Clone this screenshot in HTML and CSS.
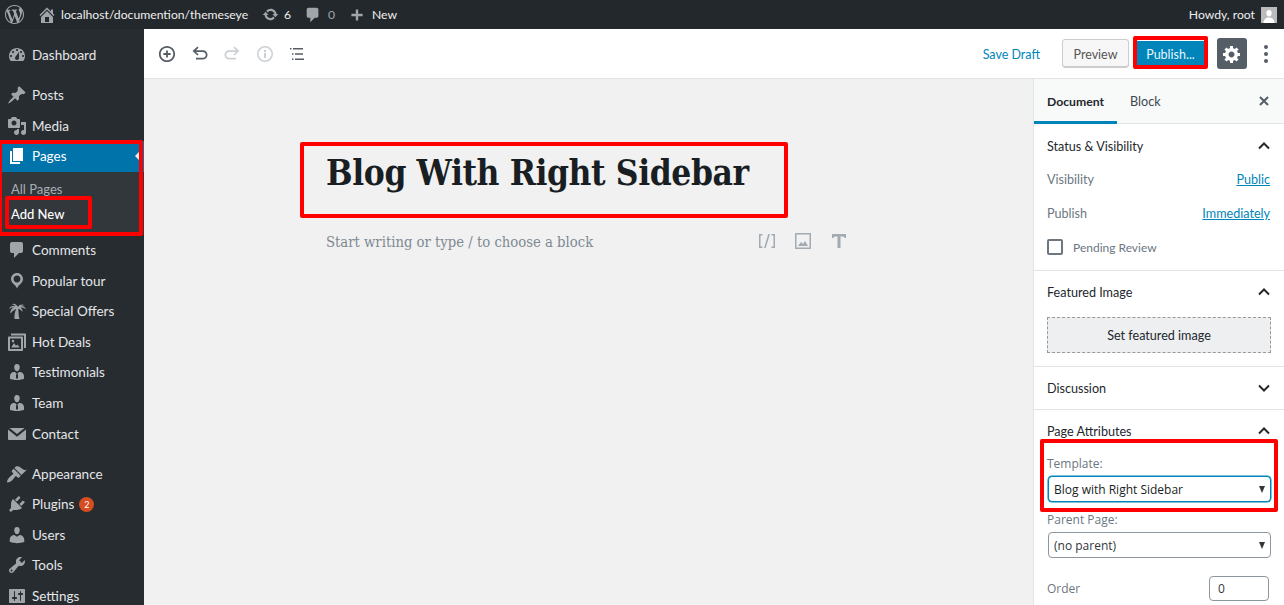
FILE: index.html
```html
<!DOCTYPE html>
<html lang="en">
<head>
<meta charset="utf-8">
<title>Edit Page</title>
<link rel="stylesheet" href="styles.css">
</head>
<body>
<header class="adminbar">
  <svg class="bar-wp" viewBox="0 0 20 20"><path d="M20 10c0-5.51-4.49-10-10-10C4.48 0 0 4.49 0 10c0 5.52 4.48 10 10 10 5.51 0 10-4.48 10-10zM7.78 15.37L4.37 6.22c.55-.02 1.17-.08 1.17-.08.5-.06.44-1.13-.06-1.11 0 0-1.45.11-2.37.11-.18 0-.37 0-.58-.01C4.12 2.69 6.87 1.11 10 1.11c2.33 0 4.45.87 6.05 2.34-.68-.11-1.65.39-1.65 1.58 0 .74.45 1.36.9 2.1.35.61.55 1.36.55 2.46 0 1.49-1.4 5-1.4 5l-3.03-8.37c.54-.02.82-.17.82-.17.5-.05.44-1.25-.06-1.22 0 0-1.44.12-2.38.12-.87 0-2.33-.12-2.33-.12-.5-.03-.56 1.2-.06 1.22l.92.08 1.26 3.41zM17.41 10c.24-.64.74-1.87.43-4.25.7 1.29 1.05 2.71 1.05 4.25 0 3.29-1.73 6.24-4.4 7.78.97-2.59 1.94-5.2 2.92-7.78zM6.1 18.09C3.12 16.65 1.11 13.53 1.11 10c0-1.3.23-2.48.72-3.59C3.25 10.3 4.67 14.2 6.1 18.09zm4.03-6.63l2.58 6.98c-.86.29-1.76.45-2.71.45-.79 0-1.57-.11-2.29-.33.81-2.38 1.62-4.74 2.42-7.1z"/></svg>
  <svg class="bar-icon home" viewBox="0 0 20 20"><path d="M16 8.5l1.53 1.53-1.06 1.06L10 4.62l-6.47 6.47-1.06-1.06L10 2.5l4 4v-2h2v4zm-6-2.46l6 5.99V18H4v-5.97zM12 17v-5H8v5h4z"/></svg>
  <span class="bar-site">localhost/documention/themeseye</span>
  <svg class="bar-icon update" viewBox="0 0 20 20"><path d="M10.2 3.28c3.53 0 6.43 2.61 6.92 6h2.08l-3.5 4-3.5-4h2.32c-.45-1.97-2.21-3.45-4.32-3.45-1.45 0-2.73.71-3.54 1.78L4.95 5.66C6.23 4.2 8.11 3.28 10.2 3.28zm-.4 13.44c-3.52 0-6.43-2.61-6.92-6H.8l3.5-4c1.17 1.33 2.33 2.67 3.5 4H5.48c.45 1.97 2.21 3.45 4.32 3.45 1.45 0 2.73-.71 3.54-1.78l1.71 1.95c-1.28 1.46-3.15 2.38-5.25 2.38z"/></svg>
  <span class="bar-count">6</span>
  <svg class="bar-icon comment" viewBox="0 0 20 20"><path d="M5 2h9c1.1 0 2 .9 2 2v7c0 1.1-.9 2-2 2h-2l-5 5v-5H5c-1.1 0-2-.9-2-2V4c0-1.1.9-2 2-2z"/></svg>
  <span class="bar-count zero">0</span>
  <svg class="bar-icon plus" viewBox="0 0 20 20"><path d="M17 8.5v3h-5.5V17h-3v-5.5H3v-3h5.5V3h3v5.5z"/></svg>
  <span class="bar-new">New</span>
  <span class="bar-howdy">Howdy, root</span>
  <span class="avatar"><svg viewBox="0 0 16 16"><path d="M8 3c1.7 0 2.7 1.3 2.7 3S9.700 9.500 8 9.500 5.300 7.700 5.300 6 6.300 3 8 3zM2.500 16c0-3.500 2.500-5.500 5.500-5.500s5.500 2 5.500 5.500z"/></svg></span>
</header>

<div class="layout">
  <nav class="menu">
    <a class="menu-item first"><svg viewBox="0 0 20 20"><path d="M3.76 16h12.48c1.1-1.37 1.76-3.11 1.76-5 0-4.42-3.58-8-8-8s-8 3.58-8 8c0 1.89.66 3.63 1.76 5zM10 4c.55 0 1 .45 1 1s-.45 1-1 1-1-.45-1-1 .45-1 1-1zM6 6c.55 0 1 .45 1 1s-.45 1-1 1-1-.45-1-1 .45-1 1-1zm8 0c.55 0 1 .45 1 1s-.45 1-1 1-1-.45-1-1 .45-1 1-1zm-5.370 5.550L12 7v6c0 1.100-.9 2-2 2s-2-.9-2-2c0-.57.24-1.080.63-1.450zM4 10c.55 0 1 .45 1 1s-.45 1-1 1-1-.45-1-1 .45-1 1-1zm12 0c.55 0 1 .45 1 1s-.45 1-1 1-1-.45-1-1 .45-1 1-1z"/></svg>Dashboard</a>
    <div class="menu-sep"></div>
    <a class="menu-item"><svg viewBox="0 0 20 20"><path d="M10.440 3.020l1.820-1.820 6.360 6.350-1.830 1.820c-1.050-.68-2.480-.57-3.410.36l-.75.75c-.92.93-1.040 2.350-.35 3.410l-1.830 1.820-2.410-2.410-2.800 2.790c-.42.42-3.380 2.710-3.800 2.290s1.860-3.390 2.280-3.810l2.790-2.790L4.100 9.360l1.830-1.820c1.050.69 2.480.57 3.400-.36l.75-.75c.93-.92 1.050-2.350.36-3.410z"/></svg>Posts</a>
    <a class="menu-item"><svg viewBox="0 0 20 20"><path d="M13 11V4c0-.55-.45-1-1-1h-1.670L9 1H5L3.670 3H2c-.55 0-1 .45-1 1v7c0 .55.45 1 1 1h10c.55 0 1-.45 1-1zM7 4.500c1.380 0 2.500 1.120 2.500 2.500S8.380 9.500 7 9.500 4.500 8.380 4.500 7 5.620 4.500 7 4.500zM14 6h5v10.500c0 1.380-1.120 2.500-2.500 2.500S14 17.880 14 16.500s1.120-2.500 2.500-2.500c.17 0 .34.02.5.05V9h-3V6zm-4 8.050V13h2v3.500c0 1.380-1.120 2.500-2.500 2.500S7 17.880 7 16.500 8.120 14 9.500 14c.17 0 .34.02.5.05z"/></svg>Media</a>
    <a class="menu-item current"><svg viewBox="0 0 20 20"><path d="M6 15V2h10v13H6zm-1 1h8v2H3V5h2v11z"/></svg>Pages<span class="current-arrow"></span></a>
    <div class="submenu">
      <a class="sub-item">All Pages</a>
      <a class="sub-item active">Add New</a>
    </div>
    <a class="menu-item"><svg viewBox="0 0 20 20"><path d="M5 2h9c1.100 0 2 .9 2 2v7c0 1.100-.9 2-2 2h-2l-5 5v-5H5c-1.100 0-2-.9-2-2V4c0-1.100.9-2 2-2z"/></svg>Comments</a>
    <a class="menu-item"><svg viewBox="0 0 20 20"><path d="M10 2C6.690 2 4 4.690 4 8c0 2.020 1.170 3.710 2.530 4.890.43.37 1.180.96 1.850 1.830.74.97 1.410 2.010 1.620 2.710.21-.7.88-1.740 1.620-2.710.67-.87 1.420-1.460 1.850-1.830C14.830 11.710 16 10.020 16 8c0-3.310-2.690-6-6-6zm0 2.560c1.900 0 3.440 1.540 3.440 3.440S11.900 11.440 10 11.440 6.560 9.900 6.560 8 8.100 4.560 10 4.560z"/></svg>Popular tour</a>
    <a class="menu-item"><svg viewBox="0 0 20 20"><path d="M11 6c1.500-2.500 4-3 6.500-1.800-1.700-.1-3 .2-4 1 2.500-.5 5 .7 5.500 3.300-1.500-1.500-3.500-2.200-5.500-1.800 1.500 1 2.200 2.500 2 4.300-1-1.700-2.500-2.900-4.300-3.300.5 3.300.2 7 1.300 10.300H7.500c-.3-3.500.3-7 1.700-10-1.700.3-3.700 1.800-5.700 4.800-.5-3 1-5.500 3.700-6.200-1.500-.4-3.200 0-5 1.300C3 5.500 5.500 4.500 8.500 5.500 7.500 4 6 3.300 4.500 3.300 6.800 1.800 9.800 3 11 6z"/></svg>Special Offers</a>
    <a class="menu-item"><svg viewBox="0 0 20 20"><path d="M4 1.500h14c.55 0 1 .45 1 1V16h-2V3.500H4z"/><path fill-rule="evenodd" d="M2 4.500h13c.55 0 1 .45 1 1V18c0 .55-.45 1-1 1H2c-.55 0-1-.45-1-1V5.500c0-.55.45-1 1-1zM3 6.500V17h11V6.500zM4.200 15.500l2.800-4.500 2 2.800 1.500-1.300 2.200 3zM6 7.800a1.300 1.300 0 1 1 0 2.600 1.300 1.300 0 0 1 0-2.600z"/></svg>Hot Deals</a>
    <a class="menu-item"><svg viewBox="0 0 20 20"><path d="M7.300 6l-.03-.19c-.04-.37-.05-.73-.03-1.080.02-.36.1-.71.25-1.040.14-.32.31-.61.52-.86s.49-.46.83-.6c.34-.15.72-.23 1.130-.23.69 0 1.260.2 1.710.59s.76.87.91 1.440.18 1.160.09 1.780l-.03.19c-.01.09-.05.25-.11.48-.05.24-.12.47-.2.69-.08.21-.19.45-.34.72-.14.27-.3.49-.47.69-.18.19-.4.34-.67.48-.27.13-.55.19-.86.19s-.59-.06-.87-.19c-.26-.13-.49-.29-.67-.5-.18-.2-.34-.42-.49-.66-.15-.25-.26-.49-.34-.73-.09-.25-.16-.47-.21-.67-.06-.21-.1-.37-.12-.5zm9.200 6.240c.41.7.5 1.410.5 2.140v2.490c0 .03-.12.08-.29.13-.18.04-.42.13-.97.27-.55.12-1.100.24-1.650.34s-1.190.19-1.950.27c-.75.08-1.460.12-2.130.12-.68 0-1.390-.04-2.140-.12-.75-.07-1.400-.17-1.980-.27-.58-.11-1.080-.23-1.560-.34-.49-.11-.8-.21-1.060-.29L3 16.870v-2.490c0-.75.07-1.460.46-2.150s.81-1.250 1.500-1.680C5.660 10.120 7.190 10 8 10l1.670 1.670L9 13v3l1.020 1.080L11 16v-3l-.68-1.330L11.970 10c.77 0 2.200.07 2.900.52.71.45 1.210 1.020 1.630 1.720z"/></svg>Testimonials</a>
    <a class="menu-item"><svg viewBox="0 0 20 20"><path d="M7.300 6l-.03-.19c-.04-.37-.05-.73-.03-1.080.02-.36.1-.71.25-1.040.14-.32.31-.61.52-.86s.49-.46.83-.6c.34-.15.72-.23 1.130-.23.69 0 1.260.2 1.710.59s.76.87.91 1.440.18 1.160.09 1.780l-.03.19c-.01.09-.05.25-.11.48-.05.24-.12.47-.2.69-.08.21-.19.45-.34.72-.14.27-.3.49-.47.69-.18.19-.4.34-.67.48-.27.13-.55.19-.86.19s-.59-.06-.87-.19c-.26-.13-.49-.29-.67-.5-.18-.2-.34-.42-.49-.66-.15-.25-.26-.49-.34-.73-.09-.25-.16-.47-.21-.67-.06-.21-.1-.37-.12-.5zm9.200 6.240c.41.7.5 1.410.5 2.140v2.490c0 .03-.12.08-.29.13-.18.04-.42.13-.97.27-.55.12-1.100.24-1.650.34s-1.190.19-1.950.27c-.75.08-1.460.12-2.130.12-.68 0-1.390-.04-2.140-.12-.75-.07-1.400-.17-1.980-.27-.58-.11-1.080-.23-1.560-.34-.49-.11-.8-.21-1.060-.29L3 16.870v-2.490c0-.75.07-1.460.46-2.150s.81-1.250 1.500-1.680C5.660 10.120 7.190 10 8 10l1.670 1.670L9 13v3l1.020 1.080L11 16v-3l-.68-1.330L11.970 10c.77 0 2.200.07 2.900.52.71.45 1.210 1.020 1.630 1.720z"/></svg>Team</a>
    <a class="menu-item"><svg viewBox="0 0 20 20"><path d="M2.500 4h15l-7.500 6zM1 5.500l9 7.300 9-7.300v9.500c0 .55-.45 1-1 1H2c-.55 0-1-.45-1-1z"/></svg>Contact</a>
    <div class="menu-sep"></div>
    <a class="menu-item"><svg viewBox="0 0 20 20"><path d="M14.480 11.060L7.410 3.990l1.500-1.500c.5-.56 2.300-.47 3.510.32 1.210.8 1.430 1.280 2.910 2.100 1.180.64 2.450 1.260 4.450.85zm-.71.71L6.700 4.700 4.930 6.470c-.39.39-.39 1.020 0 1.410l1.060 1.060c.39.39.39 1.030 0 1.420-.6.6-1.430 1.110-2.210 1.690-.35.26-.7.53-1.010.84C1.430 13.730 0 16.590 0 18.070c0 .22.18.4.4.4 1.480 0 4.340-1.430 5.280-2.770.31-.31.58-.66.84-1.010.58-.78 1.090-1.610 1.690-2.210.39-.39 1.020-.39 1.410 0l1.060 1.060c.39.39 1.020.39 1.410 0z"/></svg>Appearance</a>
    <a class="menu-item"><svg viewBox="0 0 20 20"><path d="M13.110 4.360L9.870 7.600 8 5.730l3.240-3.240c.35-.34 1.050-.2 1.560.32.52.51.66 1.210.31 1.550zm-8 1.770l.91-1.120 9.010 9.010-1.190.84c-.71.71-2.630 1.160-3.820 1.160H6.140L4.900 17.260c-.59.59-1.540.59-2.120 0-.59-.58-.59-1.530 0-2.120l1.240-1.240v-3.880c0-1.130.4-3.190 1.090-3.890zm7.260 3.970l3.240-3.240c.34-.35 1.040-.21 1.550.31.52.51.66 1.210.31 1.550l-3.240 3.250z"/></svg>Plugins<span class="badge">2</span></a>
    <a class="menu-item"><svg viewBox="0 0 20 20"><path d="M10 9.250c-2.270 0-2.730-3.440-2.730-3.440C7 4.020 7.820 2 9.970 2c2.160 0 2.980 2.020 2.710 3.810 0 0-.41 3.440-2.680 3.440zm0 2.570L12.720 10c2.390 0 4.520 2.330 4.520 4.530v2.490s-3.650 1.130-7.240 1.130c-3.650 0-7.240-1.130-7.240-1.130v-2.490c0-2.250 1.940-4.480 4.470-4.480z"/></svg>Users</a>
    <a class="menu-item"><svg viewBox="0 0 20 20"><path d="M16.680 9.770c-1.340 1.340-3.300 1.670-4.950.99l-5.410 6.520c-.99.99-2.590.99-3.580 0s-.99-2.590 0-3.570l6.520-5.420c-.68-1.650-.35-3.610.99-4.950 1.280-1.280 3.120-1.620 4.720-1.060l-2.890 2.890 2.820 2.820 2.860-2.870c.53 1.580.18 3.390-1.080 4.650zM3.810 16.210c.4.39 1.040.39 1.430 0 .4-.4.4-1.040 0-1.430-.39-.4-1.030-.4-1.430 0-.39.39-.39 1.030 0 1.430z"/></svg>Tools</a>
    <a class="menu-item"><svg viewBox="0 0 20 20"><path d="M18 16V4c0-.55-.45-1-1-1H3c-.55 0-1 .45-1 1v12c0 .55.45 1 1 1h14c.55 0 1-.45 1-1zM8 11h1c.55 0 1 .45 1 1s-.45 1-1 1H8v1.500c0 .28-.22.5-.5.5s-.5-.22-.5-.5V13H6c-.55 0-1-.45-1-1s.45-1 1-1h1V5.500c0-.28.22-.5.5-.5s.5.22.5.5V11zm5-2h-1c-.55 0-1-.45-1-1s.45-1 1-1h1V5.500c0-.28.22-.5.5-.5s.5.22.5.5V7h1c.55 0 1 .45 1 1s-.45 1-1 1h-1v5.500c0 .28-.22.5-.5.5s-.5-.22-.5-.5V9z"/></svg>Settings</a>
  </nav>

  <main class="editor">
    <div class="toolbar">
      <div class="tools-left">
        <svg class="tool tool-add" viewBox="0 0 20 20"><path d="M10 1c-5 0-9 4-9 9s4 9 9 9 9-4 9-9-4-9-9-9zm0 16c-3.900 0-7-3.100-7-7s3.100-7 7-7 7 3.100 7 7-3.100 7-7 7zm1-11H9v3H6v2h3v3h2v-3h3V9h-3V6z"/></svg>
        <svg class="tool" viewBox="0 0 20 20"><path d="M2.500 7L7.500 2.500l1.100 1.200L6 6.200h6.500c3 0 5 2 5 4.700s-2 4.600-5 4.600H6v-1.700h6.500c2 0 3.300-1.200 3.300-2.900s-1.300-3-3.300-3H6l2.600 2.500L7.500 11.600z"/></svg>
        <svg class="tool off" viewBox="0 0 20 20"><path d="M17.500 7L12.500 2.500l-1.100 1.200L14 6.200H7.500c-3 0-5 2-5 4.700s2 4.600 5 4.600H14v-1.700H7.500c-2 0-3.300-1.200-3.300-2.900s1.300-3 3.300-3H14l-2.600 2.500 1.100 1.200z"/></svg>
        <svg class="tool off" viewBox="0 0 20 20"><path d="M10 2a8 8 0 1 0 0 16 8 8 0 0 0 0-16zm0 1.500a6.500 6.500 0 1 1 0 13 6.500 6.500 0 0 1 0-13zM9 6h2v2H9zm0 3h2v5H9z"/></svg>
        <svg class="tool" viewBox="0 0 20 20"><path d="M3 4h1.500v1.500H3zM6 4h10v1.500H6zM5 9.200h1.500v1.500H5zM8 9.200h8v1.500H8zM5 14.500h1.500V16H5zM8 14.500h9V16H8z"/></svg>
      </div>
      <div class="tools-right">
        <a class="save-draft">Save Draft</a>
        <button class="btn-preview">Preview</button>
        <button class="btn-publish">Publish...</button>
        <span class="btn-settings"><svg viewBox="0 0 20 20"><path d="M18 12h-2.180c-.17.7-.44 1.350-.81 1.930l1.540 1.540-2.100 2.100-1.540-1.540c-.58.36-1.230.63-1.910.79V19H8v-2.180c-.68-.16-1.330-.43-1.910-.79l-1.540 1.540-2.120-2.120 1.540-1.540c-.36-.58-.63-1.230-.79-1.910H1V9.030h2.170c.16-.7.44-1.350.8-1.940L2.430 5.550l2.100-2.100 1.540 1.540c.58-.37 1.240-.64 1.930-.81V2h3v2.180c.68.16 1.330.43 1.910.79l1.540-1.540 2.120 2.120-1.540 1.540c.36.59.64 1.240.8 1.940H18V12zm-8.500 1.500c1.660 0 3-1.340 3-3s-1.340-3-3-3-3 1.340-3 3 1.340 3 3 3z"/></svg></span>
        <span class="btn-more"><i></i><i></i><i></i></span>
      </div>
    </div>
    <div class="editor-body">
      <section class="canvas">
        <h1 class="post-title">Blog With Right Sidebar</h1>
        <div class="appender">
          <span class="placeholder">Start writing or type / to choose a block</span>
          <span class="block-icons">
            <svg viewBox="0 0 20 20"><path d="M2 3h3.500v1.500H3.500v11H5.500V17H2zM14.500 3H18v14h-3.500v-1.500h2v-11h-2zM11.300 3h1.600L8.700 17H7.100z"/></svg>
            <svg viewBox="0 0 20 20"><path d="M2.500 2h15c.3 0 .5.2.5.5v15c0 .3-.2.5-.5.500h-15c-.3 0-.5-.2-.5-.5v-15c0-.3.2-.5.500-.5zm1 1.500v13h13v-13zM5 15l3-4 2 2 2-3 3 5z" fill-rule="evenodd"/></svg>
            <svg viewBox="0 0 20 20"><path d="M3 3h14v4h-1.500c-.3-1-.9-1.500-2-1.500h-2V17H8.500V5.500h-2c-1.100 0-1.700.5-2 1.500H3z"/></svg>
          </span>
        </div>
      </section>
      <aside class="panel">
        <div class="tabs">
          <span class="tab selected">Document</span>
          <span class="tab">Block</span>
          <svg class="tab-close" viewBox="0 0 14 14"><path d="M3 3l8 8M11 3l-8 8"/></svg>
        </div>
        <div class="sec status">
          <div class="sec-head"><span>Status &amp; Visibility</span><svg class="chev" viewBox="0 0 12 8"><path d="M1 6.500l5-5 5 5"/></svg></div>
          <div class="row"><span>Visibility</span><a>Public</a></div>
          <div class="row"><span>Publish</span><a>Immediately</a></div>
          <label class="check"><span class="box"></span>Pending Review</label>
        </div>
        <div class="sec featured">
          <div class="sec-head"><span>Featured Image</span><svg class="chev" viewBox="0 0 12 8"><path d="M1 6.500l5-5 5 5"/></svg></div>
          <div class="set-image">Set featured image</div>
        </div>
        <div class="sec discussion">
          <div class="sec-head"><span>Discussion</span><svg class="chev" viewBox="0 0 12 8"><path d="M1 1.500l5 5 5-5"/></svg></div>
        </div>
        <div class="sec attrs">
          <div class="sec-head"><span>Page Attributes</span><svg class="chev" viewBox="0 0 12 8"><path d="M1 6.500l5-5 5 5"/></svg></div>
          <div class="field-label template-label">Template:</div>
          <div class="select focused"><span>Blog with Right Sidebar</span><b></b></div>
          <div class="field-label parent-label">Parent Page:</div>
          <div class="select"><span>(no parent)</span><b></b></div>
          <div class="order"><span class="field-label">Order</span><span class="order-input">0</span></div>
        </div>
      </aside>
    </div>
  </main>
</div>

<div class="mark mark-pages"></div>
<div class="mark mark-addnew"></div>
<div class="mark mark-title"></div>
<div class="mark mark-publish"></div>
<div class="mark mark-template"></div>
</body>
</html>
```

FILE: styles.css
```css
* { box-sizing: border-box; }
html, body { margin: 0; height: 605px; overflow: hidden; }
body { position: relative; font-family: "Lato", "Open Sans", sans-serif; font-size: 13px; color: #23282d; background: #f1f1f1; }
svg { display: block; fill: currentColor; flex: none; }

/* admin bar */
.adminbar { height: 29px; background: #23282d; color: #eee; display: flex; align-items: center; font-size: 12.2px; }
.bar-wp { width: 19px; height: 19px; margin-left: 5px; color: #a0a5aa; }
.bar-icon { width: 20px; height: 20px; color: #a0a5aa; }
.home { margin-left: 13px; }
.bar-site { margin-left: 4px; width: 188px; white-space: nowrap; }
.update { margin-left: 13px; width: 17px; height: 17px; }
.bar-count { margin-left: 5px; width: 7px; }
.bar-count.zero { color: #a0a5aa; margin-left: 6px; }
.comment { margin-left: 13px; width: 18px; height: 18px; }
.plus { margin-left: 14px; width: 16px; height: 16px; }
.bar-new { margin-left: 7px; }
.bar-howdy { margin-left: auto; }
.avatar { width: 16px; height: 16px; margin: 0 7px 0 6px; background: #bbb; }
.avatar svg { width: 16px; height: 16px; color: #fff; }

/* main layout */
.layout { display: flex; height: 576px; }

/* admin menu */
.menu { width: 144px; flex: none; background: #272c31; color: #eee; padding-top: 11px; overflow: hidden; font-size: 13.5px; }
.menu-item { position: relative; display: flex; align-items: center; height: 30.6px; padding-left: 8px; white-space: nowrap; color: #e4e6e8; }
.menu-item svg { width: 20px; height: 20px; color: #a0a5aa; margin-right: 5px; margin-left: -1px; }
.menu-sep { height: 9.4px; }
.menu-item.current { background: #0073aa; color: #fff; }
.menu-item.current svg { color: #fff; }
.current-arrow { position: absolute; right: 5px; top: 50%; margin-top: -4px; border: 4px solid transparent; border-right-color: #f1f1f1; }
.submenu { background: #32373c; padding: 5px 0 0; height: 63px; }
.sub-item { display: flex; align-items: center; height: 25px; padding-left: 11px; font-size: 13px; color: #a9aeb3; }
.sub-item.active { color: #fff; font-weight: 500; }
.badge { display: inline-flex; align-items: center; justify-content: center; width: 15px; height: 15px; border-radius: 50%; background: #d54e21; color: #fff; font-size: 9px; margin-left: 5px; }

/* editor */
.editor { flex: 1; display: flex; flex-direction: column; min-width: 0; }
.toolbar { height: 50px; flex: none; background: #fff; border-bottom: 1px solid #e2e4e7; display: flex; align-items: center; justify-content: space-between; }
.tools-left { display: flex; align-items: center; margin-left: 13px; gap: 12.5px; }
.tool { width: 20px; height: 20px; color: #555d66; }
.tool-add { width: 18px; height: 18px; margin: 0 1px; }
.tool.off { color: #ccd0d4; }
.tools-right { display: flex; align-items: center; }
.save-draft { color: #0085ba; font-size: 12.5px; margin-right: 22px; padding-top: 1px; }
.btn-preview { width: 67px; height: 29px; margin: 0 8px 0 0; border: 1px solid #ccc; border-radius: 3px; background: #f7f7f7; color: #555; font: 12.5px "Lato", sans-serif; box-shadow: inset 0 -1px 0 #ccc; padding: 1px 0 0; }
.btn-publish { width: 67px; height: 25px; margin: 0; border: 0; background: #0085ba; color: #eaf4f9; font: 12.5px "Lato", sans-serif; padding: 1px 0 0; }
.btn-settings { width: 30px; height: 31px; margin-left: 13px; border-radius: 3px; background: #555d66; color: #fff; display: flex; align-items: center; justify-content: center; }
.btn-settings svg { width: 20px; height: 20px; }
.btn-more { width: 37px; display: flex; flex-direction: column; align-items: center; gap: 3px; }
.btn-more i { width: 4px; height: 4px; border-radius: 50%; background: #555d66; }

.editor-body { flex: 1; display: flex; min-height: 0; }
.canvas { flex: 1; min-width: 0; background: #f1f1f1; padding: 67px 0 0 182px; }
.post-title { margin: 0; font: 700 35px/54px "DejaVu Serif Condensed", "DejaVu Serif", serif; letter-spacing: -0.4px; color: #191e23; white-space: nowrap; }
.appender { display: flex; align-items: center; justify-content: space-between; width: 523px; margin-top: 29px; height: 24px; }
.placeholder { font: 14.7px "DejaVu Serif Condensed", "DejaVu Serif", serif; color: #7e8993; white-space: nowrap; }
.block-icons { display: flex; gap: 16px; color: #a2aab2; }
.block-icons svg { width: 20px; height: 20px; }

/* settings panel */
.panel { width: 251px; flex: none; background: #fff; border-left: 1px solid #e2e4e7; overflow: hidden; }
.tabs { display: flex; align-items: center; height: 45px; border-bottom: 1px solid #e2e4e7; position: relative; background: #f8f9f9; }
.tab { height: 45px; display: flex; align-items: center; padding: 1px 13px 0; font-size: 12.6px; color: #40464d; }
.tab.selected { width: 83px; font-size: 12.2px; font-weight: 700; color: #23282d; border-bottom: 3px solid #0085ba; padding-top: 4px; }
.tab-close { width: 14px; height: 14px; margin-left: auto; margin-right: 13px; fill: none; stroke: #555d66; stroke-width: 2; }
.sec { padding: 0 13px; border-bottom: 1px solid #e2e4e7; }
.sec-head { display: flex; align-items: center; justify-content: space-between; height: 44px; color: #23282d; font-size: 12.6px; }
.chev { width: 12px; height: 8px; fill: none; stroke: #23282d; stroke-width: 2; margin-right: 1px; }
.status { height: 147px; }
.row { display: flex; justify-content: space-between; align-items: center; height: 34px; padding-right: 1px; color: #6c7781; font-size: 12.6px; }
.row a { color: #0085ba; text-decoration: underline; }
.row:nth-child(2) { margin-top: -6px; }
.check { display: flex; align-items: center; height: 34px; color: #6c7781; font-size: 12px; }
.box { width: 16px; height: 16px; border: 2px solid #6c7781; border-radius: 2px; margin: 0 10px 0 0; background: #fff; }
.featured { height: 96px; }
.featured .sec-head { height: 42px; }
.set-image { width: 224px; height: 36px; margin-top: 4px; display: flex; align-items: center; justify-content: center; background: #edeff0; border: 1px dashed #999; font-size: 12.6px; color: #23282d; }
.discussion { height: 43px; }
.discussion .sec-head { height: 42px; }
.attrs { border-bottom: 0; }
.attrs .sec-head { height: 42px; }
.field-label { color: #6c7781; font: 12px "Open Sans", sans-serif; }
.template-label { margin: 3px 0 0; height: 16px; }
.select { position: relative; width: 223px; height: 26px; margin: 5px 0 0 1px; border: 1px solid #8d96a0; border-radius: 4px; display: flex; align-items: center; padding-left: 5px; font: 12px "Open Sans", sans-serif; color: #32373c; background: #fff; }
.select.focused { border-color: #0085ba; color: #191e23; box-shadow: 0 0 0 0.5px #0085ba; }
.select b { position: absolute; right: 5px; top: 9px; border: 3.5px solid transparent; border-top: 7px solid #32373c; border-bottom: 0; }
.parent-label { margin: 9px 0 0; height: 16px; }
.attrs .select:not(.focused) { margin-top: 5px; }
.order { display: flex; align-items: center; justify-content: space-between; margin: 18px 2px 0 0; }
.order-input { width: 60px; height: 25px; border: 1px solid #8d96a0; border-radius: 4px; display: flex; align-items: center; padding-left: 8px; font: 12px "Open Sans", sans-serif; color: #32373c; background: #fff; }

/* annotation boxes drawn over the screenshot */
.mark { position: absolute; border: 4px solid #f00; border-radius: 2px; pointer-events: none; }
.mark-pages { left: -2px; top: 140px; width: 145px; height: 96px; }
.mark-addnew { left: 5px; top: 196px; width: 87px; height: 33px; }
.mark-title { left: 300px; top: 142px; width: 488px; height: 76px; }
.mark-publish { left: 1133px; top: 36px; width: 75px; height: 33px; }
.mark-template { left: 1040px; top: 439px; width: 238px; height: 73px; }
```
